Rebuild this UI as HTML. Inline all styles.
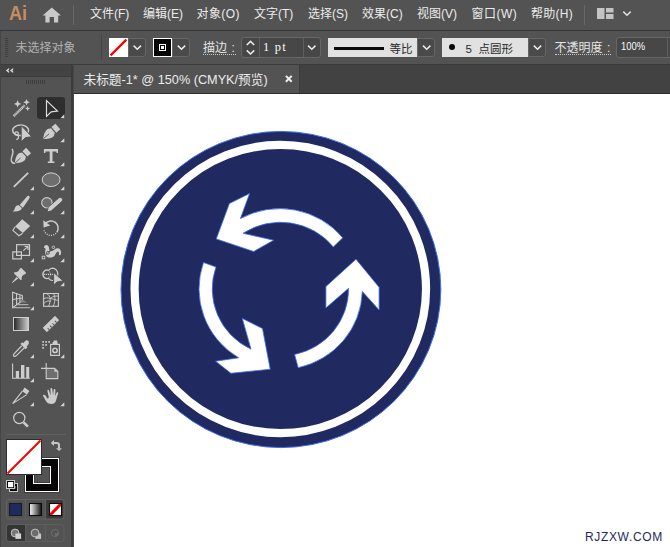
<!DOCTYPE html>
<html lang="zh-CN">
<head>
<meta charset="utf-8">
<title>Ai</title>
<style>
html,body{margin:0;padding:0;}
body{width:670px;height:547px;overflow:hidden;position:relative;background:#535353;font-family:"Liberation Sans","Noto Sans CJK SC",sans-serif;color:#dcdcdc;}
.abs{position:absolute;}
#menubar{left:0;top:0;width:670px;height:30px;background:#535353;}
#menubar .mi{position:absolute;top:6px;font-size:12px;line-height:16px;color:#ececec;white-space:nowrap;}
#ailogo{position:absolute;left:8.5px;top:0px;font-size:21px;font-weight:bold;line-height:26px;color:#c98b60;transform-origin:0 50%;transform:scaleX(0.86);}
#line1{left:0;top:30px;width:670px;height:1px;background:#353535;}
#ctrl{left:0;top:31px;width:670px;height:33px;background:#535353;}
#ctrl .t{position:absolute;font-size:12px;line-height:16px;white-space:nowrap;color:#e6e6e6;}
#ctrl .dot{border-bottom:1px dotted #c8c8c8;word-spacing:1.2px;padding-right:1px;}
.dd{position:absolute;box-sizing:border-box;border:1px solid #666;background:#4a4a4a;border-radius:0 3px 3px 0;}
.lb{position:absolute;background:#e1e1e1;top:7px;height:19px;}
#line2{left:0;top:64px;width:670px;height:1px;background:#3c3c3c;}
#tabstrip{left:74px;top:65px;width:596px;height:28px;background:#424242;}
#tab{left:74px;top:65px;width:225px;height:28px;background:#535353;}
#tab .t{position:absolute;left:9.5px;top:6.5px;font-size:12.7px;line-height:16px;color:#ececec;white-space:nowrap;}
#line3{left:74px;top:93px;width:596px;height:1px;background:#2c2c2c;}
#canvas{left:74px;top:94px;width:596px;height:453px;background:#ffffff;}
#toolhead{left:0;top:65px;width:71px;height:11px;background:#434343;}
#toolline{left:0;top:76px;width:71px;height:1px;background:#3a3a3a;}
#tools{left:0;top:77px;width:71px;height:470px;background:#535353;}
#sepv{left:71px;top:65px;width:2px;height:482px;background:#3b3b3b;}
#sepv2{left:73px;top:65px;width:1px;height:482px;background:#484848;}
#lefte{left:0;top:65px;width:1px;height:482px;background:#444;}
#wm{left:585px;top:529px;font-size:12px;line-height:16px;letter-spacing:0.65px;color:#1f2a5e;white-space:nowrap;}
svg{position:absolute;left:0;top:0;overflow:visible;}
</style>
</head>
<body>
<div id="menubar" class="abs">
  <div id="ailogo">Ai</div>
  <div class="mi" style="left:90px">文件(F)</div>
  <div class="mi" style="left:143px">编辑(E)</div>
  <div class="mi" style="left:196.5px;letter-spacing:0.4px">对象(O)</div>
  <div class="mi" style="left:254px">文字(T)</div>
  <div class="mi" style="left:308px">选择(S)</div>
  <div class="mi" style="left:362px">效果(C)</div>
  <div class="mi" style="left:417px">视图(V)</div>
  <div class="mi" style="left:471.5px;letter-spacing:0.5px">窗口(W)</div>
  <div class="mi" style="left:531px;letter-spacing:0.25px">帮助(H)</div>
</div>
<div id="line1" class="abs"></div>
<div id="ctrl" class="abs">
  <div class="t" style="left:15.5px;top:9px;color:#b2b2b2">未选择对象</div>
  <div class="abs" style="left:101px;top:4px;width:1px;height:25px;background:#454545"></div>
  <!-- fill swatch -->
  <div class="abs" style="left:109px;top:7px;width:19px;height:19px;background:#fff;"></div>
  <div class="dd" style="left:128px;top:7px;width:18px;height:19px;"></div>
  <!-- stroke swatch -->
  <div class="abs" style="left:153px;top:7px;width:19px;height:19px;background:#fff;"></div>
  <div class="abs" style="left:154px;top:8px;width:17px;height:17px;background:#050505;"></div>
  <div class="abs" style="left:159px;top:13px;width:5px;height:5px;border:1px solid #fff;"></div>
  <div class="abs" style="left:161px;top:15px;width:3px;height:3px;background:#fff;"></div>
  <div class="dd" style="left:172px;top:7px;width:18px;height:19px;"></div>
  <div class="t dot" style="left:203px;top:9px;height:14px;">描边 :</div>
  <!-- stroke weight -->
  <div class="abs" style="left:241px;top:6px;width:80px;height:21px;box-sizing:border-box;border:1px solid #666;border-radius:3px;background:#474747;"></div>
  <div class="abs" style="left:259px;top:7px;width:1px;height:19px;background:#5e5e5e;"></div>
  <div class="abs" style="left:303px;top:7px;width:1px;height:19px;background:#5e5e5e;"></div>
  <div class="t" style="left:263px;top:7.5px;font-family:'Liberation Serif',serif;font-size:12.5px;letter-spacing:1.2px;color:#fafafa;">1 pt</div>
  <!-- profile -->
  <div class="lb" style="left:328px;width:89px;"></div>
  <div class="abs" style="left:334px;top:16px;width:50px;height:3px;background:#0a0a0a;"></div>
  <div class="t" style="left:389.5px;top:10px;font-size:11.5px;color:#2a2a2a;">等比</div>
  <div class="dd" style="left:417px;top:7px;width:18px;height:19px;"></div>
  <!-- brush -->
  <div class="lb" style="left:442px;width:86px;"></div>
  <div class="abs" style="left:448.5px;top:13px;width:6px;height:6px;border-radius:50%;background:#0a0a0a;"></div>
  <div class="t" style="left:465.5px;top:10px;font-size:11.5px;color:#2a2a2a;">5</div>
  <div class="t" style="left:478.5px;top:10px;font-size:11.5px;color:#2a2a2a;">点圆形</div>
  <div class="dd" style="left:528px;top:7px;width:18px;height:19px;"></div>
  <div class="t dot" style="left:554.5px;top:9px;height:14px;">不透明度 :</div>
  <div class="abs" style="left:616px;top:6px;width:60px;height:21px;box-sizing:border-box;border:1px solid #666;border-radius:3px;background:#474747;"></div>
  <div class="abs" style="left:667px;top:7px;width:1px;height:19px;background:#5e5e5e;"></div>
  <div class="t" style="left:620.5px;top:6.5px;font-size:11px;color:#fafafa;transform-origin:0 50%;transform:scaleX(0.855);">100%</div>
</div>
<div id="line2" class="abs"></div>
<div id="tabstrip" class="abs"></div>
<div id="tab" class="abs"><div class="t">未标题-1* @ 150% (CMYK/预览)</div></div>
<div id="line3" class="abs"></div><div class="abs" style="left:299px;top:65px;width:1px;height:28px;background:#3c3c3c"></div>
<div id="toolhead" class="abs"></div>
<div id="toolline" class="abs"></div>
<div id="tools" class="abs"></div>
<div id="sepv" class="abs"></div><div id="sepv2" class="abs"></div>
<div id="lefte" class="abs"></div><div class="abs" style="left:0;top:31px;width:1px;height:33px;background:#474747"></div>
<div id="canvas" class="abs"></div>
<div id="wm" class="abs">RJZXW.COM</div>
<svg width="670" height="100" viewBox="0 0 670 100">
  <!-- home icon -->
  <path d="M42.6,15.6 L51.8,7.4 L61,15.6 L58.2,15.6 L58.2,22.6 L54,22.6 L54,17 L49.6,17 L49.6,22.6 L45.4,22.6 L45.4,15.6 Z" fill="#c9c9c9"/>
  <rect x="73" y="5" width="1" height="20" fill="#676767"/>
  <rect x="584" y="5" width="1" height="20" fill="#676767"/>
  <!-- workspace icon -->
  <rect x="597" y="8" width="7.5" height="11" fill="#c4c4c4"/>
  <rect x="606" y="8" width="7.5" height="4.5" fill="#c4c4c4"/>
  <rect x="606" y="14" width="7.5" height="5" fill="#c4c4c4"/>
  <path d="M623.3,11.6 L627,15.2 L630.7,11.6" fill="none" stroke="#e0e0e0" stroke-width="1.5"/>
  <!-- grip -->
  <g fill="#3f3f3f">
    <rect x="5" y="38" width="3.2" height="1"/><rect x="5" y="40" width="3.2" height="1"/><rect x="5" y="42" width="3.2" height="1"/><rect x="5" y="44" width="3.2" height="1"/><rect x="5" y="46" width="3.2" height="1"/><rect x="5" y="48" width="3.2" height="1"/><rect x="5" y="50" width="3.2" height="1"/><rect x="5" y="52" width="3.2" height="1"/><rect x="5" y="54" width="3.2" height="1"/><rect x="5" y="56" width="3.2" height="1"/>
  </g>
  <!-- fill none line -->
  <path d="M110.6,55.4 L126.4,39.6" stroke="#f50000" stroke-width="2.2" fill="none"/>
  <!-- chevrons -->
  <g fill="none" stroke="#ececec" stroke-width="1.5">
    <path d="M133.6,45.6 L137.3,49.2 L141,45.6"/>
    <path d="M177.8,45.6 L181.5,49.2 L185.2,45.6"/>
    <path d="M308.1,45.6 L311.8,49.2 L315.5,45.6"/>
    <path d="M423,45.6 L426.7,49.2 L430.4,45.6"/>
    <path d="M533.8,45.6 L537.5,49.2 L541.2,45.6"/>
    <path d="M246.8,45 L250.5,41.4 L254.2,45"/>
    <path d="M246.8,50.4 L250.5,54 L254.2,50.4"/>
  </g>
  <!-- tab close -->
  <path d="M285.9,75.9 L291.7,81.7 M291.7,75.9 L285.9,81.7" stroke="#f0f0f0" stroke-width="2" fill="none"/>
  <!-- collapse << -->
  <path d="M5.8,70.5 L9.1,67.9 L9.1,69.7 L8,70.5 L9.1,71.3 L9.1,73.1 Z M9.9,70.5 L13.2,67.9 L13.2,69.7 L12.1,70.5 L13.2,71.3 L13.2,73.1 Z" fill="#dadada"/>
</svg>
<svg width="670" height="547" viewBox="0 0 670 547">
  <ellipse cx="280.9" cy="289.5" rx="159.9" ry="158.1" fill="#202a60" stroke="#3d6df0" stroke-width="1"/>
  <ellipse cx="280.3" cy="289" rx="145.75" ry="144.1" fill="none" stroke="#ffffff" stroke-width="8.2"/>
  <g fill="#ffffff" stroke="#3d6df0" stroke-width="0.8" stroke-linejoin="miter">
    <path d="M342.8,237.8 A81.7,80.5 0 0 0 240.4,218.6 L249.6,193.5 L229.4,203.5 L216.25,238.9 L253.7,251.5 L273.6,240.2 L243.1,233.3 A68,66.8 0 0 1 333.3,246.9 Z"/>
    <path d="M298.2,367.7 A81.7,80.5 0 0 0 362.3,291.4 L379.1,310 L379.1,287.3 L356,259.2 L325.9,286.6 L325.9,307.9 L348.6,288.3 A68,66.8 0 0 1 294.6,354.5 Z"/>
    <path d="M203.5,262.5 A81.7,80.5 0 0 0 238.6,357.8 L215.6,361.2 L230.9,373.3 L270.2,369.2 L262.5,328.6 L242.3,318.4 L251,349.2 A68,66.8 0 0 1 216,267 Z"/>
  </g>
</svg>
<svg width="74" height="547" viewBox="0 0 74 547">
<g fill="#3e3e3e"><rect x="26" y="80" width="1" height="4"/><rect x="28" y="80" width="1" height="4"/><rect x="30" y="80" width="1" height="4"/><rect x="32" y="80" width="1" height="4"/><rect x="34" y="80" width="1" height="4"/><rect x="36" y="80" width="1" height="4"/><rect x="38" y="80" width="1" height="4"/><rect x="40" y="80" width="1" height="4"/><rect x="42" y="80" width="1" height="4"/><rect x="44" y="80" width="1" height="4"/></g>
<rect x="37" y="97" width="28" height="22" rx="3" ry="3" fill="#2e2e2e"/>
<path d="M13.7,116.1 L24.6,105.4" stroke="#cdcdcd" stroke-width="2.5" stroke-dasharray="1.2 0.4" fill="none"/>
<path d="M17.60,100.20 L18.70,102.80 L21.30,103.90 L18.70,105.00 L17.60,107.60 L16.50,105.00 L13.90,103.90 L16.50,102.80Z" fill="#cdcdcd"/>
<path d="M26.50,99.00 L27.48,101.32 L29.80,102.30 L27.48,103.28 L26.50,105.60 L25.52,103.28 L23.20,102.30 L25.52,101.32Z" fill="#cdcdcd"/>
<path d="M27.60,105.90 L28.34,107.66 L30.10,108.40 L28.34,109.14 L27.60,110.90 L26.86,109.14 L25.10,108.40 L26.86,107.66Z" fill="#cdcdcd"/>
<path d="M46.5,100.6 L46.5,116.4 L51.2,111.9 L57.5,111 Z" fill="none" stroke="#dedede" stroke-width="1.15" stroke-linejoin="miter"/>
<path d="M64.3,118.2 L60.4,118.2 L64.3,114.3 Z" fill="#d4d4d4"/>
<ellipse cx="20.6" cy="130.3" rx="8" ry="5.3" fill="none" stroke="#cdcdcd" stroke-width="1.5"/>
<circle cx="16.6" cy="133.6" r="1.7" fill="none" stroke="#cdcdcd" stroke-width="1.3"/>
<path d="M17.8,135 C19.2,137 18.6,139.3 16.3,139.5" fill="none" stroke="#cdcdcd" stroke-width="1.3"/>
<path d="M21.2,125.6 L21.2,141.8 L25.4,137.7 L31.8,136.7 Z" fill="#cdcdcd" stroke="#535353" stroke-width="1"/>
<path d="M43.00,139.00 C46.97,139.06 51.26,138.71 53.74,136.23 L54.88,132.92 L51.01,128.33 L47.56,128.89 C44.69,130.91 43.62,135.08 43.00,139.00 Z" fill="#cdcdcd"/><path d="M43.38,138.68 L49.12,133.85" stroke="#535353" stroke-width="0.9" fill="none"/><path d="M56.25,132.68 L60.22,129.33 L55.46,123.67 L51.48,127.02 Z" fill="#cdcdcd"/>
<path d="M64.3,142.2 L60.4,142.2 L64.3,138.3 Z" fill="#d4d4d4"/>
<path d="M14.80,163.30 C18.65,163.17 22.79,162.64 25.08,160.12 L26.02,156.86 L22.07,152.59 L18.75,153.29 C16.06,155.39 15.22,159.47 14.80,163.30 Z" fill="#cdcdcd"/><path d="M15.16,162.97 L20.49,158.02" stroke="#535353" stroke-width="0.9" fill="none"/><path d="M27.34,156.56 L31.04,153.13 L26.16,147.87 L22.46,151.30 Z" fill="#cdcdcd"/>
<path d="M12,149 C15,152.5 10.5,157 11.3,160.5 C11.8,162.5 13.5,163.5 15,163.3" fill="none" stroke="#cdcdcd" stroke-width="1.4"/>
<path d="M43.9,148.9 H58 V153 H56.5 V151.6 H52.5 V161.4 H54.4 V162.9 H47.8 V161.4 H49.7 V151.6 H45.4 V153 H43.9 Z" fill="#cdcdcd"/>
<path d="M64.3,166.2 L60.4,166.2 L64.3,162.3 Z" fill="#d4d4d4"/>
<path d="M13.8,186.8 L28.1,172.9" stroke="#cdcdcd" stroke-width="1.8" fill="none"/>
<path d="M34.0,190.2 L30.1,190.2 L34.0,186.3 Z" fill="#d4d4d4"/>
<ellipse cx="51.1" cy="179.7" rx="8.9" ry="6.8" fill="#6e6e6e" stroke="#d6d6d6" stroke-width="1"/>
<path d="M64.3,190.2 L60.4,190.2 L64.3,186.3 Z" fill="#d4d4d4"/>
<path d="M29.1,196.1 C29.9,196.8 29.7,197.9 29.1,198.7 L22.9,207.7 L19.6,205 L26.8,196.7 C27.5,195.9 28.4,195.6 29.1,196.1 Z" fill="#cdcdcd"/>
<path d="M19.3,205.8 L21.9,208 C21.3,210.6 18,212 12.8,211.4 C15,210 14.6,207.6 15.9,206.2 C16.9,205.2 18.3,205.1 19.3,205.8 Z" fill="#cdcdcd"/>
<path d="M34.0,214.2 L30.1,214.2 L34.0,210.3 Z" fill="#d4d4d4"/>
<circle cx="46.9" cy="202.8" r="5.2" fill="#6e6e6e" stroke="#cdcdcd" stroke-width="1.1"/>
<path d="M47.2,212 L48.2,207.2 L58.8,197.9 C59.8,197.1 61.3,197.3 62.1,198.3 C62.9,199.3 62.8,200.7 61.8,201.6 L51.4,210.8 Z" fill="#cdcdcd" stroke="#535353" stroke-width="0.9"/>
<path d="M64.3,214.2 L60.4,214.2 L64.3,210.3 Z" fill="#d4d4d4"/>
<path d="M22.2,219.2 L30.2,226.1 L22.9,233 L15.1,226.6 Z" fill="#cdcdcd"/>
<path d="M15.1,226.9 L12.9,230.3 L18.9,235.7 L22.6,233.2" fill="none" stroke="#cdcdcd" stroke-width="1.1"/>
<path d="M34.0,238.2 L30.1,238.2 L34.0,234.3 Z" fill="#d4d4d4"/>
<path d="M45.38,223.57 A7.2,7.2 0 0 1 56.80,232.33" fill="none" stroke="#cdcdcd" stroke-width="1.5"/>
<path d="M55.99,233.29 A7.2,7.2 0 0 1 43.77,229.20" fill="none" stroke="#cdcdcd" stroke-width="1.3" stroke-dasharray="1 1.25"/>
<path d="M43.3,220.2 L43.6,227.6 L50.3,225.6 Z" fill="#cdcdcd"/>
<path d="M64.3,238.2 L60.4,238.2 L64.3,234.3 Z" fill="#d4d4d4"/>
<rect x="16.6" y="244.7" width="12.9" height="10.7" fill="none" stroke="#cdcdcd" stroke-width="1.2"/>
<rect x="12.8" y="251.9" width="8.6" height="7" fill="none" stroke="#cdcdcd" stroke-width="1.2"/>
<path d="M23.3,250.7 L27.6,246.9 M24.6,246.5 H28 V249.9" fill="none" stroke="#cdcdcd" stroke-width="1.1"/>
<path d="M34.0,262.2 L30.1,262.2 L34.0,258.3 Z" fill="#d4d4d4"/>
<path d="M43.9,247.6 C44,245.2 46.6,244.2 48.1,245.8 C49.6,247.6 49,250.4 49.8,251.4 C51.2,251.6 53,250.6 54.6,249.4 C56.6,247.8 59.4,247.8 60.6,250.2 C61.5,252.2 61,254.4 60.4,255.3 L58.9,255 C59.2,253.2 58.9,251.8 58,251.6 C56.6,251.8 56,253.6 54.8,255.4 C53.4,257.2 51,257.8 48.6,257.4 C46.3,256.9 45.2,255 45.1,252.6 C45,250.6 45.9,249 45.4,248.4 C44.9,248 44.4,248 43.9,247.6 Z" fill="#cdcdcd"/>
<path d="M43.8,257.2 L53,247.8" stroke="#535353" stroke-width="0.9" fill="none"/>
<rect x="42.2" y="256.2" width="2.6" height="2.6" fill="#535353" stroke="#cdcdcd" stroke-width="0.9"/>
<circle cx="53.4" cy="247.3" r="1.25" fill="#535353" stroke="#cdcdcd" stroke-width="0.9"/>
<circle cx="47.9" cy="252.8" r="1.5" fill="#cdcdcd" stroke="#535353" stroke-width="0.9"/>
<path d="M46.9,253.8 L48.9,251.8" stroke="#535353" stroke-width="0.8" fill="none"/>
<path d="M64.3,262.2 L60.4,262.2 L64.3,258.3 Z" fill="#d4d4d4"/>
<path d="M21.06,267.7 L26.1,272.75 L25.4,274 L22.85,275.3 L21.57,277.4 L21.8,279.8 L20.5,280 L13.9,273.3 L14.4,272.2 L16.7,272 L18.5,271 L19.8,268.7 Z" fill="#cdcdcd"/>
<path d="M16.6,277 L18.2,278.6 L12.3,283 L11.9,282.6 Z" fill="#cdcdcd"/>
<path d="M34.0,286.2 L30.1,286.2 L34.0,282.3 Z" fill="#d4d4d4"/>
<ellipse cx="46.4" cy="274.3" rx="4.1" ry="4.3" fill="none" stroke="#8c8c8c" stroke-width="1"/>
<path d="M48.6,270.3 A4.1,4.3 0 1 0 48.6,278.3 A5.3,6.2 0 0 0 52.5,280.5 A5.3,6.2 0 0 0 52.5,268.1 A5.3,6.2 0 0 0 48.6,270.3 Z" fill="none" stroke="#cdcdcd" stroke-width="1.2"/>
<path d="M43.6,274.4 H54" stroke="#e6e6e6" stroke-width="1.2" stroke-dasharray="1.1 1.05" fill="none"/>
<path d="M53.6,272.4 L53.6,285.2 L57,282 L63.2,280.9 Z" fill="#cdcdcd" stroke="#535353" stroke-width="1"/>
<path d="M64.3,286.2 L60.4,286.2 L64.3,282.3 Z" fill="#d4d4d4"/>
<path d="M12.6,292.2 L22.4,295.6 L22.4,300.6 L12.6,307.6 Z M12.6,299.5 L22.4,298 M16.6,293.6 L16.6,304.7 M19.9,294.7 L19.9,302.3" fill="none" stroke="#cdcdcd" stroke-width="1.1"/>
<path d="M22.6,299.4 L27,302.4 L20.2,302.4 Z" fill="#858585"/>
<path d="M17.6,304.6 H28.4 M13,307.5 H30.2" stroke="#acacac" stroke-width="1.25" fill="none"/>
<path d="M34.0,310.2 L30.1,310.2 L34.0,306.3 Z" fill="#d4d4d4"/>
<rect x="43.6" y="293.5" width="14.8" height="12.8" fill="none" stroke="#cdcdcd" stroke-width="1.1"/>
<path d="M46.6,293.5 C51.5,296 50.5,302 48.6,306.3 M53.4,293.5 C55.6,297 55.2,302 53.2,306.3 M43.6,298.8 C47,296.4 53,299.6 58.4,300.4 M43.6,303.6 C46,301 49,300.4 51,301.2 M50.4,298.4 C53,296.4 55,295.6 58.4,296.2" fill="none" stroke="#cdcdcd" stroke-width="0.9"/>
<defs><linearGradient id="g1" x1="0" x2="1" y1="0" y2="0"><stop offset="0" stop-color="#262626"/><stop offset="1" stop-color="#cfcfcf"/></linearGradient><linearGradient id="g2" x1="0" x2="1" y1="0" y2="0"><stop offset="0" stop-color="#ffffff"/><stop offset="1" stop-color="#101010"/></linearGradient></defs>
<rect x="13.5" y="317.5" width="15" height="13" fill="url(#g1)" stroke="#cdcdcd" stroke-width="1"/>
<g transform="translate(50.95,324) rotate(-44.4)"><rect x="-8.6" y="-3" width="17.2" height="6" rx="0.6" fill="#cdcdcd"/><path d="M-5.2,3 V0.5 M-1.8,3 V0.5 M1.6,3 V0.5 M5,3 V0.5" stroke="#535353" stroke-width="1"/></g>
<path d="M25.2,341 C26.6,339.6 28.6,340.4 28.9,342.2 C29.1,343.8 28,345 26.6,346.4 L27.4,347.4 L25.6,349.2 L20.4,344 L22.2,342.2 L23.2,343.2 Z" fill="#cdcdcd"/>
<path d="M21.6,346 L14,353.8 C13,355 13.4,356.4 14.6,356.4 C15.4,356.4 16,356 16.6,355.4 L24.4,347.8" fill="none" stroke="#cdcdcd" stroke-width="1.2"/>
<path d="M34.0,358.2 L30.1,358.2 L34.0,354.3 Z" fill="#d4d4d4"/>
<rect x="50.6" y="344.4" width="8.8" height="11" fill="none" stroke="#cdcdcd" stroke-width="1.2"/>
<circle cx="55" cy="350.4" r="2.2" fill="none" stroke="#cdcdcd" stroke-width="1.5"/>
<path d="M52.6,344 V342 H53.6 V340.4 H57.2 V342 H57.6 V344 Z" fill="#cdcdcd"/>
<g fill="#bdbdbd"><rect x="42.2" y="341" width="1.8" height="1.8"/><rect x="45.2" y="341" width="1.8" height="1.8"/><rect x="48.2" y="341" width="1.8" height="1.8"/><rect x="42.2" y="344" width="1.8" height="1.8"/><rect x="45.2" y="344" width="1.8" height="1.8"/><rect x="42.2" y="347" width="1.8" height="1.8"/></g>
<path d="M64.3,358.2 L60.4,358.2 L64.3,354.3 Z" fill="#d4d4d4"/>
<path d="M12.6,363.6 V378.2 H29.8" fill="none" stroke="#cdcdcd" stroke-width="1.1"/>
<rect x="15.8" y="371" width="3.2" height="7" fill="#cdcdcd"/><rect x="21" y="365" width="3.4" height="13" fill="#cdcdcd"/><rect x="26.2" y="367" width="3" height="11" fill="#cdcdcd"/>
<path d="M34.0,382.2 L30.1,382.2 L34.0,378.3 Z" fill="#d4d4d4"/>
<path d="M46.2,368.4 H54.6 L57.8,371.6 V378.6 H46.2 Z" fill="#6e6e6e" stroke="#cdcdcd" stroke-width="1.1"/>
<path d="M54.4,368.4 V371.8 H57.8 Z" fill="#cdcdcd"/>
<path d="M46.2,363 V368.4 M41,368.4 H46.2" stroke="#cdcdcd" stroke-width="1.1" fill="none"/>
<path d="M24.6,387.6 L29.4,391 L27,394.6 L22.2,391.2 Z" fill="#cdcdcd"/>
<path d="M22.4,391.2 L12.6,403.6 L26.8,394.6" fill="none" stroke="#cdcdcd" stroke-width="1.1" stroke-linejoin="miter"/>
<path d="M34.0,406.2 L30.1,406.2 L34.0,402.3 Z" fill="#d4d4d4"/>
<path d="M46.6,397.4 C46,395.6 44.4,394.4 43.2,395 C42.6,395.6 43.6,396.8 44.4,398.2 C45.6,400.4 46.8,402.6 48.6,403.6 C50.2,404.2 52.6,404.2 54,403.6 C55.6,402.6 56,400.6 56.6,398.6 L58.2,393.2 C58.4,392.2 57,391.8 56.6,392.8 L55.2,396.2 L55.4,390 C55.4,388.8 53.8,388.8 53.6,390 L53.2,395.4 L52.2,388.8 C52,387.6 50.4,387.8 50.4,389 L50.8,395.4 L49,390.4 C48.6,389.2 47.2,389.6 47.4,390.8 L48.8,397.6 C48.8,398.6 47.2,398.8 46.6,397.4 Z" fill="#cdcdcd"/>
<path d="M64.3,406.2 L60.4,406.2 L64.3,402.3 Z" fill="#d4d4d4"/>
<circle cx="19.3" cy="418" r="5.6" fill="none" stroke="#cdcdcd" stroke-width="1.2"/>
<path d="M23.6,422.4 L27.9,426.7" stroke="#cdcdcd" stroke-width="2.6" fill="none"/>
<rect x="6" y="434" width="60" height="1" fill="#616161"/>
<rect x="24.5" y="457.5" width="35" height="35" fill="none" stroke="#3c3c3c" stroke-width="1"/>
<rect x="25.5" y="458.5" width="33" height="33" fill="#060404" stroke="#fff" stroke-width="1"/>
<rect x="33.5" y="466.5" width="17" height="17" fill="#535353" stroke="#fff" stroke-width="1"/>
<rect x="34.5" y="467.5" width="15" height="15" fill="none" stroke="#3e3e3e" stroke-width="1"/>
<rect x="6.5" y="439.5" width="35" height="35" fill="#fff" stroke="#2e2e2e" stroke-width="1"/>
<path d="M7.5,473.5 L40.5,440.5" stroke="#f50000" stroke-width="1.9" fill="none"/>
<path d="M53.5,443 H56.8 Q59,443 59,445.2 V448.6" fill="none" stroke="#c6c6c6" stroke-width="2"/>
<path d="M50.7,443 L54,440 L54,446 Z" fill="#c6c6c6"/><path d="M59,451.1 L55.9,448.2 L62.1,448.2 Z" fill="#c6c6c6"/>
<rect x="9.5" y="483.5" width="8" height="8" fill="#050505" stroke="#c8c8c8" stroke-width="1"/>
<path d="M12,488.6 H15 V486" fill="none" stroke="#d0d0d0" stroke-width="0.9"/>
<rect x="6.5" y="480.5" width="8" height="8" fill="#050505" stroke="#c8c8c8" stroke-width="1"/>
<rect x="8" y="482" width="5.2" height="5.2" fill="#fff"/>
<path d="M46,500 H61 A2.5,2.5 0 0 1 63.5,502.5 V516.5 A2.5,2.5 0 0 1 61,519 H46 Z" fill="#3a3a3a"/>
<rect x="6.5" y="499.5" width="57.5" height="19.5" rx="2.5" fill="none" stroke="#636363" stroke-width="1"/>
<path d="M25.5,500 V519 M45.5,500 V519" stroke="#5f5f5f" stroke-width="1"/>
<rect x="9.5" y="503.5" width="12" height="12" fill="#202a60" stroke="#1c1c1c" stroke-width="1.1"/>
<rect x="29.5" y="503.5" width="12" height="12" fill="url(#g2)" stroke="#0c0c0c" stroke-width="1.1"/>
<clipPath id="cn"><rect x="50" y="504" width="11" height="11"/></clipPath>
<rect x="49.5" y="503.5" width="12" height="12" fill="#fff" stroke="#0a0a0a" stroke-width="1.1"/>
<path d="M49,516 L62,503" stroke="#f50000" stroke-width="3" fill="none" clip-path="url(#cn)"/>
<path d="M9,524.5 H25 V541.5 H9 A2.5,2.5 0 0 1 6.5,539 V527 A2.5,2.5 0 0 1 9,524.5 Z" fill="#343434"/>
<rect x="6.5" y="524.5" width="57.5" height="17" rx="2.5" fill="none" stroke="#5e5e5e" stroke-width="1"/>
<path d="M25.5,525 V541.5 M45.5,525 V541.5" stroke="#5c5c5c" stroke-width="1"/>
<circle cx="15.1" cy="533" r="3.9" fill="#777" stroke="#c8c8c8" stroke-width="1"/><rect x="15.4" y="533.5" width="5.7" height="5.4" fill="#d2d2d2"/>
<rect x="35.4" y="533.5" width="5.7" height="5.4" fill="#c4c4c4"/><circle cx="35.1" cy="533" r="3.9" fill="#6c6c6c" stroke="#c0c0c0" stroke-width="1"/>
<circle cx="55" cy="533" r="3.6" fill="none" stroke="#6c6c6c" stroke-width="1"/><path d="M55,533 H58.6 A3.6,3.6 0 0 1 55,536.6 Z" fill="#6c6c6c"/>
</svg>
</body></html>
